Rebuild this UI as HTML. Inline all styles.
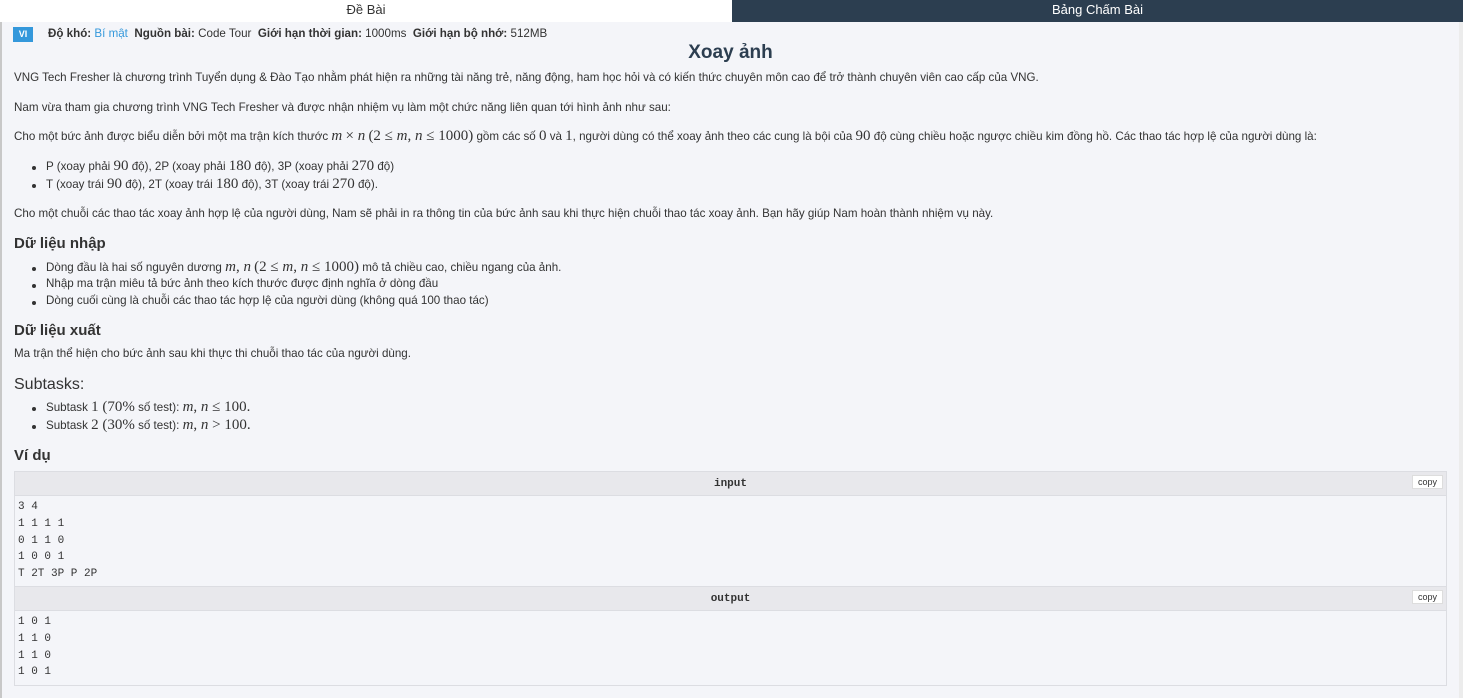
<!DOCTYPE html>
<html><head><meta charset="utf-8"><style>
*{margin:0;padding:0;box-sizing:border-box}
body{width:1463px;height:698px;background:#f4f5f9;font-family:"Liberation Sans",sans-serif;font-size:11.6px;color:#333;position:relative;overflow:hidden}
.a{position:absolute;white-space:nowrap}
.m{font-family:"Liberation Serif",serif;font-style:italic;font-size:15px}
.n{font-family:"Liberation Serif",serif;font-size:15px}
h3{font-size:15px;font-weight:bold;color:#333}
.dot{position:absolute;width:4px;height:4px;border-radius:2px;background:#333}
.mono{font-family:"Liberation Mono",monospace;font-size:11px;color:#333}
.copy{position:absolute;left:1412px;background:#fff;border:1px solid #ddd;font-size:9px;padding:1px 5px;color:#333}
</style></head><body>
<div class="a" style="left:0;top:0;width:2px;height:698px;background:#c8c8c8"></div>
<div class="a" style="left:0;top:0;width:732px;height:22px;background:#fff;text-align:center;line-height:20px;font-size:13px;color:#333">Đề Bài</div>
<div class="a" style="left:732px;top:0;width:731px;height:22px;background:#2c3e50;text-align:center;line-height:20px;font-size:13px;color:#fff">Bảng Chấm Bài</div>
<div class="a" style="left:1459px;top:22px;width:4px;height:676px;background:#ececec"></div>
<div class="a" style="left:13px;top:27px;width:20px;height:15px;background:#3498db;color:#fff;font-size:9px;font-weight:bold;text-align:center;line-height:15px">VI</div>
<div class="a" style="left:48px;top:27px"><b>Độ khó:</b> <span style="color:#3498db">Bí mật</span> &nbsp;<b>Nguồn bài:</b> Code Tour &nbsp;<b>Giới hạn thời gian:</b> 1000ms &nbsp;<b>Giới hạn bộ nhớ:</b> 512MB</div>
<div class="a" style="left:0;width:1461px;top:42px;text-align:center;font-size:19px;font-weight:bold;color:#2c3e50">Xoay ảnh</div>
<div class="a" style="left:14px;top:71px">VNG Tech Fresher là chương trình Tuyển dụng &amp; Đào Tạo nhằm phát hiện ra những tài năng trẻ, năng động, ham học hỏi và có kiến thức chuyên môn cao để trở thành chuyên viên cao cấp của VNG.</div>
<div class="a" style="left:14px;top:101px">Nam vừa tham gia chương trình VNG Tech Fresher và được nhận nhiệm vụ làm một chức năng liên quan tới hình ảnh như sau:</div>
<div class="a" style="left:14px;top:128px">Cho một bức ảnh được biểu diễn bởi một ma trận kích thước <span class="m">m</span> <span class="n">× </span><span class="m">n</span> <span class="n">(2 ≤ </span><span class="m">m</span><span class="n">, </span><span class="m">n</span><span class="n"> ≤ 1000)</span> gồm các số <span class="n">0</span> và <span class="n">1</span>, người dùng có thể xoay ảnh theo các cung là bội của <span class="n">90</span> độ cùng chiều hoặc ngược chiều kim đồng hồ. Các thao tác hợp lệ của người dùng là:</div>
<div class="dot" style="left:32px;top:166px"></div>
<div class="a" style="left:46px;top:158px">P (xoay phải <span class="n">90</span> độ), 2P (xoay phải <span class="n">180</span> độ), 3P (xoay phải <span class="n">270</span> độ)</div>
<div class="dot" style="left:32px;top:184px"></div>
<div class="a" style="left:46px;top:176px">T (xoay trái <span class="n">90</span> độ), 2T (xoay trái <span class="n">180</span> độ), 3T (xoay trái <span class="n">270</span> độ).</div>
<div class="a" style="left:14px;top:207px">Cho một chuỗi các thao tác xoay ảnh hợp lệ của người dùng, Nam sẽ phải in ra thông tin của bức ảnh sau khi thực hiện chuỗi thao tác xoay ảnh. Bạn hãy giúp Nam hoàn thành nhiệm vụ này.</div>
<h3 class="a" style="left:14px;top:235px">Dữ liệu nhập</h3>
<div class="dot" style="left:32px;top:267px"></div>
<div class="a" style="left:46px;top:259px">Dòng đầu là hai số nguyên dương <span class="m">m</span><span class="n">, </span><span class="m">n</span> <span class="n">(2 ≤ </span><span class="m">m</span><span class="n">, </span><span class="m">n</span><span class="n"> ≤ 1000)</span> mô tả chiều cao, chiều ngang của ảnh.</div>
<div class="dot" style="left:32px;top:284px"></div>
<div class="a" style="left:46px;top:277px">Nhập ma trận miêu tả bức ảnh theo kích thước được định nghĩa ở dòng đầu</div>
<div class="dot" style="left:32px;top:301px"></div>
<div class="a" style="left:46px;top:294px">Dòng cuối cùng là chuỗi các thao tác hợp lệ của người dùng (không quá 100 thao tác)</div>
<h3 class="a" style="left:14px;top:322px">Dữ liệu xuất</h3>
<div class="a" style="left:14px;top:347px">Ma trận thể hiện cho bức ảnh sau khi thực thi chuỗi thao tác của người dùng.</div>
<div class="a" style="left:14px;top:376px;font-size:16px">Subtasks:</div>
<div class="dot" style="left:32px;top:407px"></div>
<div class="a" style="left:46px;top:399px">Subtask <span class="n">1 (70%</span> số test): <span class="m">m</span><span class="n">, </span><span class="m">n</span><span class="n"> ≤ 100.</span></div>
<div class="dot" style="left:32px;top:425px"></div>
<div class="a" style="left:46px;top:417px">Subtask <span class="n">2 (30%</span> số test): <span class="m">m</span><span class="n">, </span><span class="m">n</span><span class="n"> &gt; 100.</span></div>
<h3 class="a" style="left:14px;top:447px">Ví dụ</h3>
<div class="a" style="left:14px;top:471px;width:1433px;height:215px;border:1px solid #dcdde2;background:#f4f5f9"></div>
<div class="a" style="left:15px;top:472px;width:1431px;height:24px;background:#e8e8ec;border-bottom:1px solid #dcdde2;text-align:center;line-height:22px"><b class="mono" style="font-weight:bold">input</b></div>
<div class="copy" style="top:475px">copy</div>
<div class="a mono" style="left:18px;top:499px;line-height:16.8px">3 4<br>1 1 1 1<br>0 1 1 0<br>1 0 0 1<br>T 2T 3P P 2P</div>
<div class="a" style="left:15px;top:586px;width:1431px;height:25px;background:#e8e8ec;border-top:1px solid #dcdde2;border-bottom:1px solid #dcdde2;text-align:center;line-height:22px"><b class="mono" style="font-weight:bold">output</b></div>
<div class="copy" style="top:590px">copy</div>
<div class="a mono" style="left:18px;top:614px;line-height:16.8px">1 0 1<br>1 1 0<br>1 1 0<br>1 0 1</div>
</body></html>
